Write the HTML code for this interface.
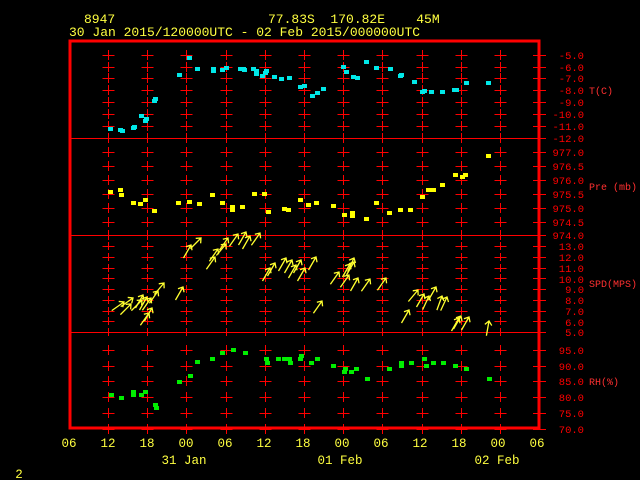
<!DOCTYPE html>
<html><head><meta charset="utf-8"><style>
html,body{margin:0;padding:0;background:#000;width:640px;height:480px;overflow:hidden}
svg{position:absolute;left:0;top:0}
text{font-family:"Liberation Mono","DejaVu Sans Mono",monospace}
.y{fill:#ffff40;font-size:13px}
.r{fill:#ff0000;font-size:10.5px}
.t{fill:#ff3030;font-size:10px}
</style></head><body>
<svg id="s" width="640" height="480" xmlns="http://www.w3.org/2000/svg">
<g id="grid" stroke="#ff0000" stroke-width="1" shape-rendering="crispEdges"></g>
<rect x="70" y="41" width="469" height="387" fill="none" stroke="#ff0000" stroke-width="3" shape-rendering="crispEdges"/>
<g stroke="#ff0000" stroke-width="1" shape-rendering="crispEdges">
<line x1="70" y1="138.5" x2="539" y2="138.5"/>
<line x1="70" y1="235.5" x2="539" y2="235.5"/>
<line x1="70" y1="332.5" x2="539" y2="332.5"/>
</g>
<g id="pts"></g>
<g id="arr" stroke="#ffff30" stroke-width="1.3" fill="none"></g>
<text class="y" x="84" y="23">8947</text>
<text class="y" x="268" y="23" xml:space="preserve">77.83S  170.82E    45M</text>
<text class="y" x="69" y="36">30 Jan 2015/120000UTC - 02 Feb 2015/000000UTC</text>
<g class="r" text-anchor="end">
<text x="584" y="59">-5.0</text><text x="584" y="71">-6.0</text><text x="584" y="82">-7.0</text><text x="584" y="94">-8.0</text><text x="584" y="106">-9.0</text><text x="584" y="118">-10.0</text><text x="584" y="130">-11.0</text><text x="584" y="142">-12.0</text>
<text x="584" y="156">977.0</text><text x="584" y="170">976.5</text><text x="584" y="184">976.0</text><text x="584" y="198">975.5</text><text x="584" y="212">975.0</text><text x="584" y="226">974.5</text><text x="584" y="239">974.0</text>
<text x="584" y="250">13.0</text><text x="584" y="261">12.0</text><text x="584" y="272">11.0</text><text x="584" y="283">10.0</text><text x="584" y="293">9.0</text><text x="584" y="304">8.0</text><text x="584" y="315">7.0</text><text x="584" y="326">6.0</text><text x="584" y="336">5.0</text>
<text x="584" y="354">95.0</text><text x="584" y="370">90.0</text><text x="584" y="385">85.0</text><text x="584" y="401">80.0</text><text x="584" y="417">75.0</text><text x="584" y="433">70.0</text>
</g>
<g class="t">
<text x="589" y="94">T(C)</text><text x="589" y="190">Pre (mb)</text><text x="589" y="287">SPD(MPS)</text><text x="589" y="385">RH(%)</text>
</g>
<g class="y" text-anchor="middle" style="font-size:12.5px">
<text x="69" y="447">06</text><text x="108" y="447">12</text><text x="147" y="447">18</text><text x="186" y="447">00</text><text x="225" y="447">06</text><text x="264" y="447">12</text><text x="303" y="447">18</text><text x="342" y="447">00</text><text x="381" y="447">06</text><text x="420" y="447">12</text><text x="459" y="447">18</text><text x="498" y="447">00</text><text x="537" y="447">06</text>
<text x="184" y="464">31 Jan</text><text x="340" y="464">01 Feb</text><text x="497" y="464">02 Feb</text>
<text x="19" y="478">2</text>
</g>
</svg>
<script>
var NS="http://www.w3.org/2000/svg";
function el(p,t,a){var e=document.createElementNS(NS,t);for(var k in a)e.setAttribute(k,a[k]);p.appendChild(e);return e;}
var g=document.getElementById('grid');
var panels=[[[55,67,78,90,102,114,126,138],5],[[152,166,180,194,208,222,235],5],[[246,257,268,278,289,300,311,321,332],4],[[350,366,381,397,413,429],5]];
for(var i=0;i<11;i++){var x=Math.round(108+39.2*i)+0.5;
 panels.forEach(function(p){p[0].forEach(function(y){
  el(g,'line',{x1:x,y1:y-p[1],x2:x,y2:y+p[1]});
  el(g,'line',{x1:x-6,y1:y+0.5,x2:x+6,y2:y+0.5});});});}
panels.forEach(function(p){p[0].forEach(function(y){el(g,'line',{x1:533,y1:y+0.5,x2:546,y2:y+0.5});});});
var P=document.getElementById('pts');
function pts(c,l){l.forEach(function(q){el(P,'rect',{x:q[0]-2,y:q[1]-2,width:5,height:4,fill:c});});}
pts('#00e8e8',[[110,129],[120,130],[122,131],[133,128],[134,127],[141,116],[145,121],[146,119],[154,101],[155,99],[179,75],[189,58],[197,69],[213,71],[213,69],[222,70],[226,68],[240,69],[243,69],[244,70],[253,69],[256,71],[256,74],[262,76],[266,71],[265,73],[274,77],[281,79],[289,78],[300,87],[304,86],[312,96],[317,93],[323,89],[343,67],[346,72],[353,77],[357,78],[366,62],[376,68],[390,69],[400,76],[401,75],[414,82],[422,92],[424,91],[431,92],[442,92],[454,90],[456,90],[466,83],[488,83]]);
pts('#ffff00',[[110,192],[120,190],[121,195],[133,203],[140,204],[145,200],[154,211],[178,203],[189,202],[199,204],[212,195],[222,203],[232,207],[232,210],[242,207],[254,194],[264,194],[268,212],[284,209],[288,210],[300,200],[308,205],[316,203],[333,206],[344,215],[352,216],[352,213],[366,219],[376,203],[389,213],[400,210],[410,210],[422,197],[428,190],[433,190],[442,185],[455,175],[462,177],[465,175],[488,156]]);
pts('#00ee00',[[111,395],[121,398],[133,392],[133,395],[141,395],[145,392],[155,405],[156,408],[179,382],[190,376],[197,362],[212,359],[222,353],[233,350],[245,353],[266,359],[267,363],[278,359],[284,359],[289,359],[290,363],[300,359],[301,356],[311,363],[317,359],[333,366],[344,372],[345,369],[351,372],[356,369],[367,379],[389,369],[401,366],[401,363],[411,363],[424,359],[426,366],[433,363],[443,363],[455,366],[466,369],[489,379]]);
var A=document.getElementById('arr');
var ar=[[124,302,55],[133,298,55],[131,304,45],[142,300,45],[143,295,30],[147,297,30],[151,298,35],[158,291,35],[164,283,40],[149,313,35],[152,308,30],[183,287,30],[201,238,45],[191,245,30],[215,257,35],[218,249,35],[226,244,40],[228,238,35],[238,234,35],[246,232,30],[250,236,30],[260,233,35],[275,263,30],[270,268,30],[286,258,30],[292,260,30],[296,265,30],[301,260,30],[305,268,30],[316,257,30],[322,301,35],[339,272,35],[349,275,35],[350,264,30],[354,262,30],[354,258,25],[358,278,30],[370,279,35],[386,278,35],[409,310,30],[418,290,40],[424,294,30],[429,296,25],[436,287,30],[442,296,20],[447,297,25],[459,318,30],[461,316,30],[469,317,30],[489,321,10]];
ar.forEach(function(a){var gg=el(A,'g',{transform:'translate('+a[0]+','+a[1]+') rotate('+a[2]+')'});
 el(gg,'path',{d:'M0,0 L0,15 M-3.5,4 L0,0 L3.5,4'});});
</script>
</body></html>
